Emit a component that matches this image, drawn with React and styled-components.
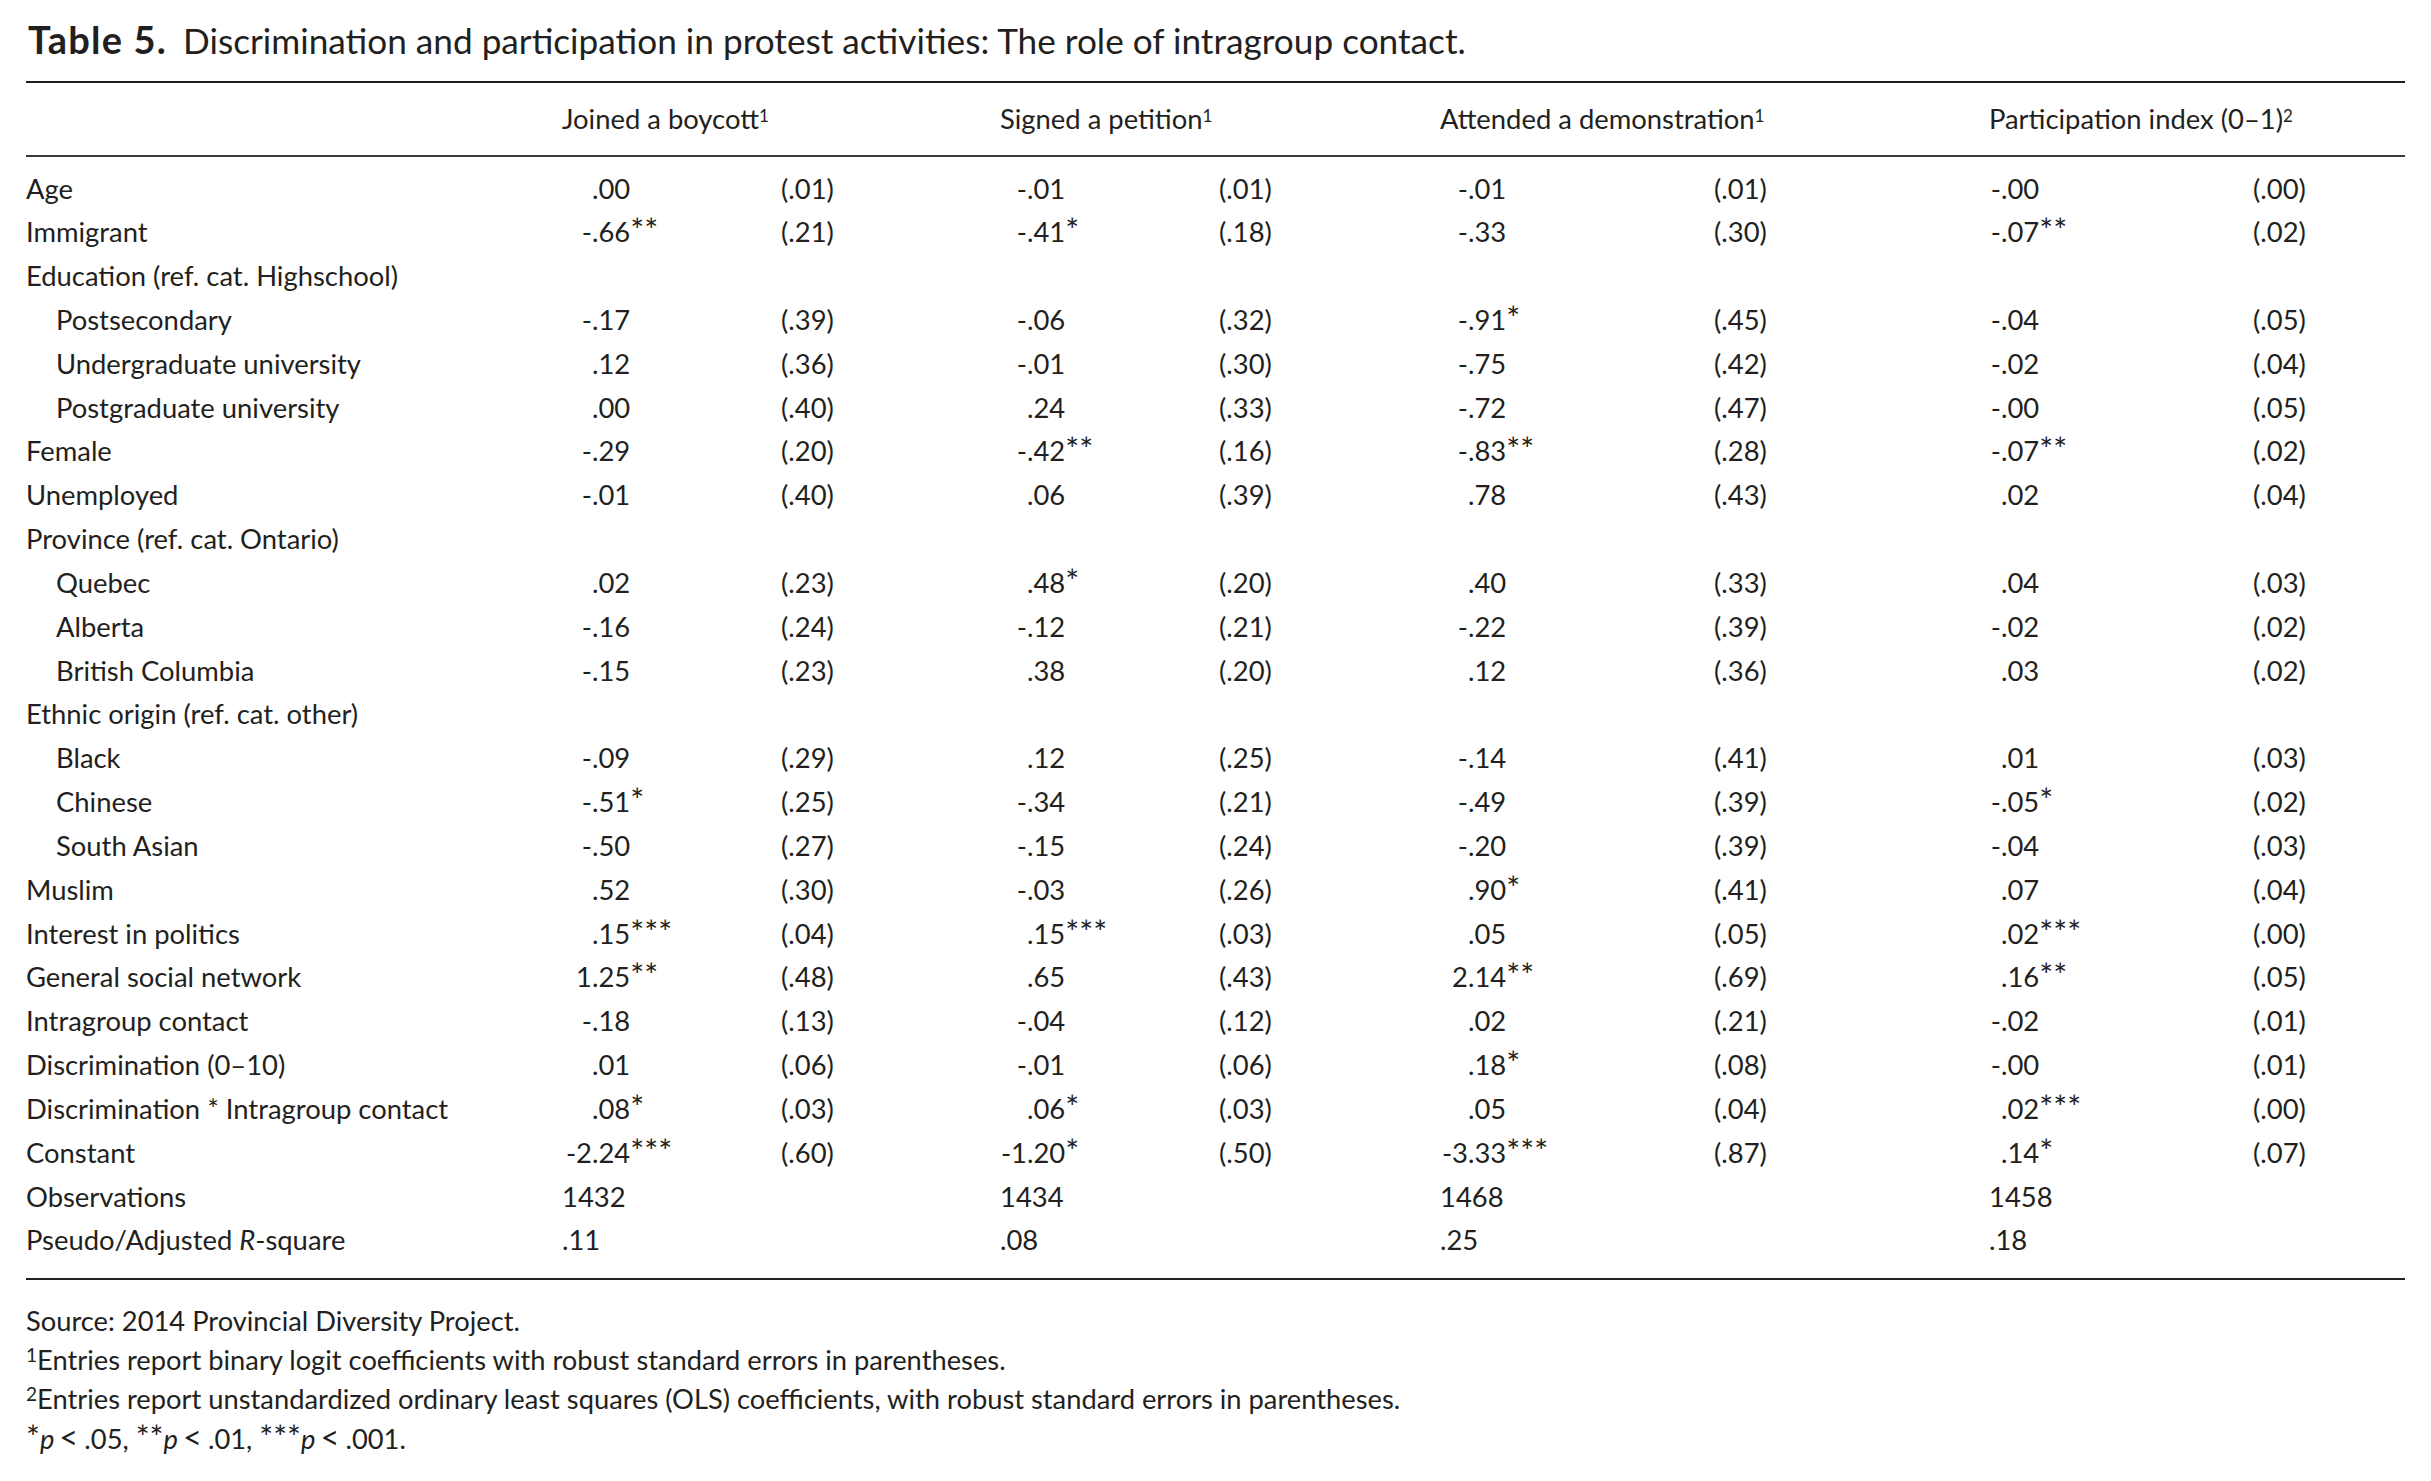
import React from "react";
import styled, { createGlobalStyle } from "styled-components";

const GlobalStyle = createGlobalStyle`
  html, body {
    margin: 0;
    padding: 0;
    background: #fff;
  }
  body {
    font-family: Lato, "Liberation Sans", sans-serif;
    color: #231f20;
  }
`;

// label | (coef, se) x 4
const COLS = "536px 219px 219px 219px 221px 274px 275px 264px 152px";
// distance from column start to the decimal point, per model
const INT_W = [30, 27, 28, 12];

const Page = styled.div`
  width: 2379px;
  padding: 20px 26px 0 26px;
`;

const Title = styled.h1`
  margin: 0;
  padding-left: 2px;
  font-size: 35.2px;
  line-height: 38px;
  font-weight: 400;
  white-space: nowrap;
`;

const TitleLabel = styled.span`
  font-size: 38px;
  font-weight: 700;
  letter-spacing: 1.2px;
  margin-right: 16px;
`;

const Table = styled.div`
  margin-top: 22px;
  border-top: 2px solid #231f20;
  border-bottom: 2px solid #231f20;
  font-size: 27.4px;
`;

const HeadRow = styled.div`
  display: grid;
  grid-template-columns: ${COLS};
  height: 72px;
  line-height: 72px;
  border-bottom: 2px solid #3a3a3a;
`;

const HeadCell = styled.div`
  grid-column: span 2;
  white-space: nowrap;
`;

const Sup = styled.span`
  font-size: ${(p) => p.$size || "0.62em"};
  vertical-align: ${(p) => p.$lift || "7px"};
  line-height: 0;
`;

const Body = styled.div`
  padding: 9.5px 0 15.5px;
`;

const Row = styled.div`
  display: grid;
  grid-template-columns: ${COLS};
  height: 43.83px;
  line-height: 43.83px;
  white-space: nowrap;
`;

const Label = styled.div`
  padding-left: ${(p) => (p.$indent ? "30px" : "0")};
`;

const Cell = styled.div``;

const IntPart = styled.span`
  display: inline-block;
  width: ${(p) => p.$w}px;
  text-align: right;
`;

const Stars = styled.span`
  font-size: 1.2em;
  line-height: 0;
`;

const Lt = styled.span`
  font-size: 1.2em;
  line-height: 0;
  margin: 0 6px 0 5px;
`;

const Notes = styled.div`
  margin-top: 21px;
  font-size: 27.3px;
  line-height: 39.3px;
`;

const Note = styled.div`
  white-space: nowrap;
`;

const Coef = ({ v, w }) => {
  const i = v.indexOf(".");
  const m = v.match(/^([^*]*)(\**)$/);
  const num = m[1];
  const stars = m[2];
  return (
    <Cell>
      <IntPart $w={w}>{num.slice(0, i)}</IntPart>
      {num.slice(i)}
      {stars && <Stars>{stars}</Stars>}
    </Cell>
  );
};

const rows = [
  { label: "Age", d: [".00", "(.01)", "-.01", "(.01)", "-.01", "(.01)", "-.00", "(.00)"] },
  { label: "Immigrant", d: ["-.66**", "(.21)", "-.41*", "(.18)", "-.33", "(.30)", "-.07**", "(.02)"] },
  { label: "Education (ref. cat. Highschool)" },
  { label: "Postsecondary", sub: true, d: ["-.17", "(.39)", "-.06", "(.32)", "-.91*", "(.45)", "-.04", "(.05)"] },
  { label: "Undergraduate university", sub: true, d: [".12", "(.36)", "-.01", "(.30)", "-.75", "(.42)", "-.02", "(.04)"] },
  { label: "Postgraduate university", sub: true, d: [".00", "(.40)", ".24", "(.33)", "-.72", "(.47)", "-.00", "(.05)"] },
  { label: "Female", d: ["-.29", "(.20)", "-.42**", "(.16)", "-.83**", "(.28)", "-.07**", "(.02)"] },
  { label: "Unemployed", d: ["-.01", "(.40)", ".06", "(.39)", ".78", "(.43)", ".02", "(.04)"] },
  { label: "Province (ref. cat. Ontario)" },
  { label: "Quebec", sub: true, d: [".02", "(.23)", ".48*", "(.20)", ".40", "(.33)", ".04", "(.03)"] },
  { label: "Alberta", sub: true, d: ["-.16", "(.24)", "-.12", "(.21)", "-.22", "(.39)", "-.02", "(.02)"] },
  { label: "British Columbia", sub: true, d: ["-.15", "(.23)", ".38", "(.20)", ".12", "(.36)", ".03", "(.02)"] },
  { label: "Ethnic origin (ref. cat. other)" },
  { label: "Black", sub: true, d: ["-.09", "(.29)", ".12", "(.25)", "-.14", "(.41)", ".01", "(.03)"] },
  { label: "Chinese", sub: true, d: ["-.51*", "(.25)", "-.34", "(.21)", "-.49", "(.39)", "-.05*", "(.02)"] },
  { label: "South Asian", sub: true, d: ["-.50", "(.27)", "-.15", "(.24)", "-.20", "(.39)", "-.04", "(.03)"] },
  { label: "Muslim", d: [".52", "(.30)", "-.03", "(.26)", ".90*", "(.41)", ".07", "(.04)"] },
  { label: "Interest in politics", d: [".15***", "(.04)", ".15***", "(.03)", ".05", "(.05)", ".02***", "(.00)"] },
  { label: "General social network", d: ["1.25**", "(.48)", ".65", "(.43)", "2.14**", "(.69)", ".16**", "(.05)"] },
  { label: "Intragroup contact", d: ["-.18", "(.13)", "-.04", "(.12)", ".02", "(.21)", "-.02", "(.01)"] },
  { label: "Discrimination (0–10)", d: [".01", "(.06)", "-.01", "(.06)", ".18*", "(.08)", "-.00", "(.01)"] },
  { label: "Discrimination * Intragroup contact", d: [".08*", "(.03)", ".06*", "(.03)", ".05", "(.04)", ".02***", "(.00)"] },
  { label: "Constant", d: ["-2.24***", "(.60)", "-1.20*", "(.50)", "-3.33***", "(.87)", ".14*", "(.07)"] },
  { label: "Observations", plain: true, d: ["1432", "", "1434", "", "1468", "", "1458", ""] },
  {
    label: (
      <>
        Pseudo/Adjusted <i>R</i>-square
      </>
    ),
    plain: true,
    d: [".11", "", ".08", "", ".25", "", ".18", ""],
  },
];

const headers = [
  ["Joined a boycott", "1"],
  ["Signed a petition", "1"],
  ["Attended a demonstration", "1"],
  ["Participation index (0–1)", "2"],
];

export default function App() {
  return (
    <Page>
      <GlobalStyle />
      <Title>
        <TitleLabel>Table 5.</TitleLabel>
        Discrimination and participation in protest activities: The role of intragroup contact.
      </Title>
      <Table>
        <HeadRow>
          <div />
          {headers.map(([h, n]) => (
            <HeadCell key={h}>
              {h}
              <Sup>{n}</Sup>
            </HeadCell>
          ))}
        </HeadRow>
        <Body>
          {rows.map((r, ri) => (
            <Row key={ri}>
              <Label $indent={r.sub}>{r.label}</Label>
              {r.d &&
                r.d.map((v, ci) =>
                  ci % 2 === 0 && !r.plain ? (
                    <Coef key={ci} v={v} w={INT_W[ci / 2]} />
                  ) : (
                    <Cell key={ci}>{v}</Cell>
                  )
                )}
            </Row>
          ))}
        </Body>
      </Table>
      <Notes>
        <Note>Source: 2014 Provincial Diversity Project.</Note>
        <Note>
          <Sup $size="0.7em" $lift="8px">1</Sup>Entries report binary logit coefficients with robust standard errors in parentheses.
        </Note>
        <Note>
          <Sup $size="0.7em" $lift="8px">2</Sup>Entries report unstandardized ordinary least squares (OLS) coefficients, with robust standard errors in parentheses.
        </Note>
        <Note>
          <Stars>*</Stars>
          <i>p</i>
          <Lt>&lt;</Lt>.05, <Stars>**</Stars>
          <i>p</i>
          <Lt>&lt;</Lt>.01, <Stars>***</Stars>
          <i>p</i>
          <Lt>&lt;</Lt>.001.
        </Note>
      </Notes>
    </Page>
  );
}
